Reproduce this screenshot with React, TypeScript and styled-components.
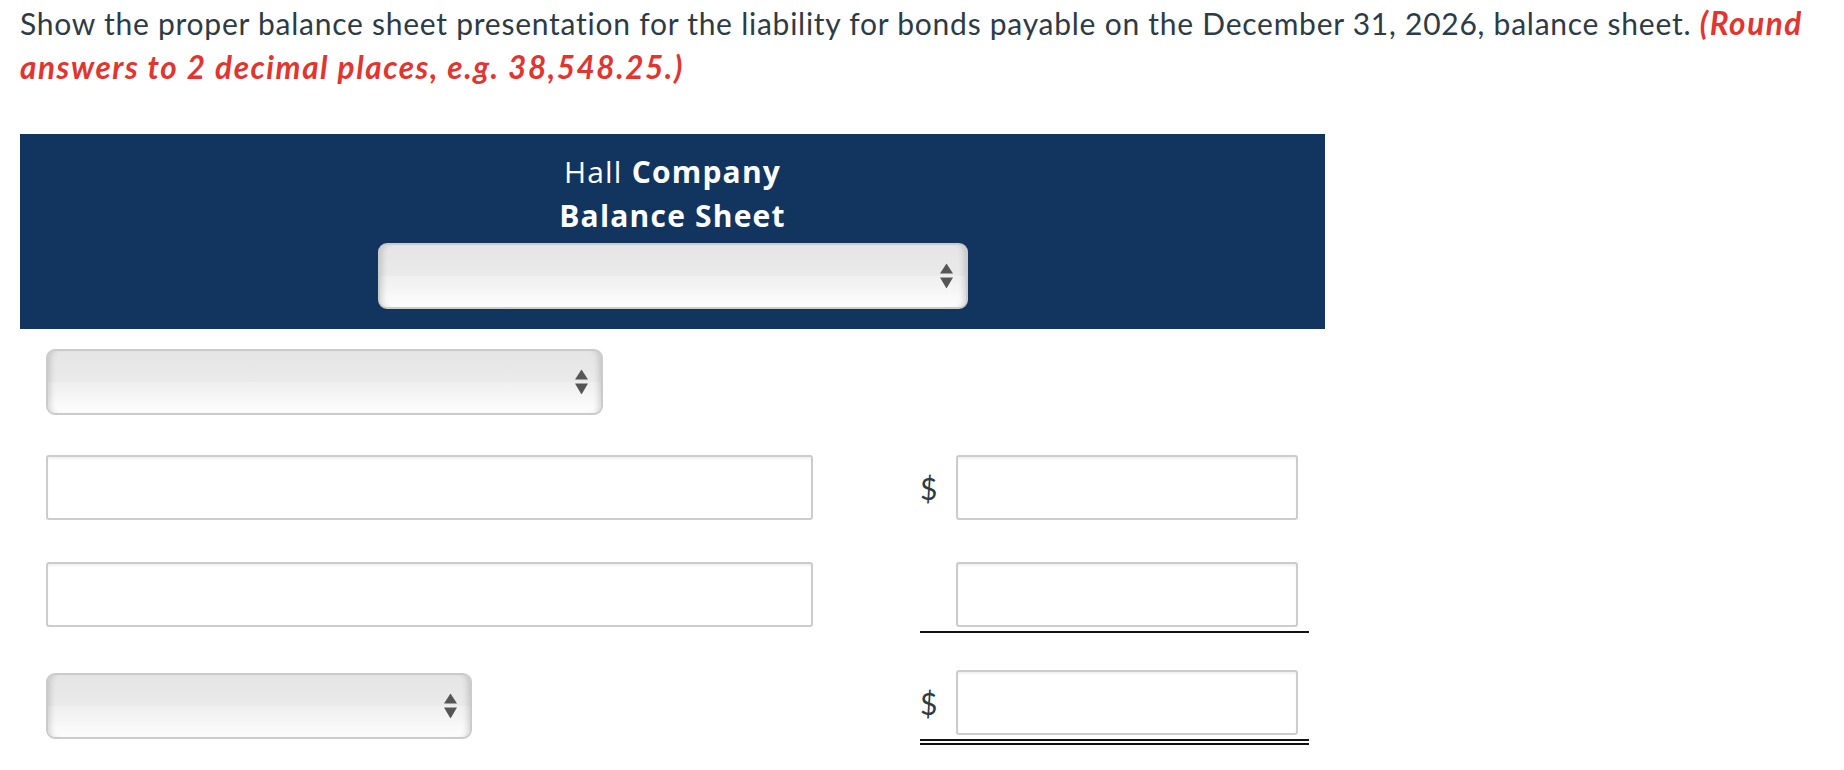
import React from "react";
import styled, { createGlobalStyle } from "styled-components";

const GlobalStyle = createGlobalStyle`
  html, body {
    margin: 0;
    padding: 0;
    background: #ffffff;
  }
  body {
    font-family: Lato, "Noto Sans", sans-serif;
  }
`;

const Page = styled.div`
  width: 1844px;
  box-sizing: border-box;
  padding: 0 20px 0 20px;
`;

const Prompt = styled.p`
  margin: 0;
  padding-top: 2px;
  font-family: Lato, sans-serif;
  font-size: 30px;
  line-height: 43.5px;
  letter-spacing: 0.75px;
  color: #2d3b45;
`;

const Hint = styled.strong`
  font-style: italic;
  font-weight: 700;
  font-size: 31.5px;
  line-height: 40px;
  letter-spacing: 1.55px;
  color: #e3342f;
`;

const Header = styled.div`
  margin-top: 45px;
  width: 1305px;
  box-sizing: border-box;
  padding: 16px 0 20px;
  background: #12355f;
  color: #ffffff;
  text-align: center;
  font-family: "Open Sans", sans-serif;
  font-size: 30px;
  line-height: 44px;
  letter-spacing: 1.2px;
`;

const TitleLine = styled.div<{ $bold?: boolean }>`
  font-weight: ${(p) => (p.$bold ? 700 : 500)};
`;

const Bold = styled.span`
  font-weight: 700;
`;

const HeaderSelectRow = styled.div`
  display: flex;
  justify-content: center;
  margin-top: 5px;
`;

const SelectWrap = styled.div<{ $width: number; $offset?: number }>`
  position: relative;
  width: ${(p) => p.$width}px;
  height: 66px;
  margin-top: ${(p) => p.$offset ?? 0}px;
`;

const SelectBox = styled.select`
  appearance: none;
  -webkit-appearance: none;
  display: block;
  width: 100%;
  height: 100%;
  box-sizing: border-box;
  border: 2px solid #cbcbcb;
  border-radius: 9px;
  background: linear-gradient(
    to bottom,
    #e5e5e5 0%,
    #eaeaea 49%,
    #efefef 50%,
    #fdfdfd 100%
  );
  box-shadow: inset 7px 0 6px -5px rgba(0, 0, 0, 0.16),
    inset -7px 0 6px -5px rgba(0, 0, 0, 0.16);
  font-family: Lato, sans-serif;
  font-size: 24px;
  color: #2d3b45;
  outline: none;
`;

const Arrows = styled.svg`
  position: absolute;
  right: 15px;
  top: 50%;
  transform: translateY(-50%);
  pointer-events: none;
`;

const Form = styled.div`
  padding-left: 26px;
  display: flex;
  flex-direction: column;
`;

const Row = styled.div<{ $top: number }>`
  display: grid;
  grid-template-columns: 767px 389px;
  column-gap: 107px;
  align-items: start;
  margin-top: ${(p) => p.$top}px;
`;

const TextField = styled.input`
  display: block;
  width: 100%;
  height: 65px;
  box-sizing: border-box;
  border: 2px solid #cccccc;
  border-radius: 3px;
  box-shadow: inset 0 2px 2px rgba(0, 0, 0, 0.06);
  background: #ffffff;
  font-family: Lato, sans-serif;
  font-size: 24px;
  padding: 0 12px;
  outline: none;
`;

type Rule = "none" | "single" | "double";

const AmountCell = styled.div<{ $rule: Rule }>`
  display: flex;
  align-items: center;
  padding-right: 11px;
  padding-bottom: ${(p) => (p.$rule === "none" ? 0 : 4)}px;
  border-bottom: ${(p) =>
    p.$rule === "single"
      ? "2px solid #111"
      : p.$rule === "double"
      ? "6px double #111"
      : "none"};
`;

const Dollar = styled.span`
  flex: 0 0 36px;
  font-family: Lato, sans-serif;
  font-size: 30px;
  line-height: 1;
  color: #2d3b45;
`;

function ArrowIcon() {
  return (
    <Arrows width="13" height="25" viewBox="0 0 13 25">
      <polygon points="6.5,0 13,10 0,10" fill="#555555" />
      <polygon points="0,14 13,14 6.5,25" fill="#555555" />
    </Arrows>
  );
}

function Dropdown({ width, offset }: { width: number; offset?: number }) {
  return (
    <SelectWrap $width={width} $offset={offset}>
      <SelectBox defaultValue="">
        <option value=""></option>
      </SelectBox>
      <ArrowIcon />
    </SelectWrap>
  );
}

function Amount({ dollar, rule }: { dollar?: boolean; rule: Rule }) {
  return (
    <AmountCell $rule={rule}>
      <Dollar>{dollar ? "$" : ""}</Dollar>
      <TextField type="text" />
    </AmountCell>
  );
}

export default function App() {
  return (
    <>
      <GlobalStyle />
      <Page>
        <Prompt>
          Show the proper balance sheet presentation for the liability for
          bonds payable on the December 31, 2026, balance sheet.{" "}
          <Hint>(Round answers to 2 decimal places, e.g. 38,548.25.)</Hint>
        </Prompt>
        <Header>
          <TitleLine>
            Hall <Bold>Company</Bold>
          </TitleLine>
          <TitleLine $bold>Balance Sheet</TitleLine>
          <HeaderSelectRow>
            <Dropdown width={590} />
          </HeaderSelectRow>
        </Header>
        <Form>
          <Row $top={20}>
            <Dropdown width={557} />
          </Row>
          <Row $top={40}>
            <TextField type="text" />
            <Amount dollar rule="none" />
          </Row>
          <Row $top={42}>
            <TextField type="text" />
            <Amount rule="single" />
          </Row>
          <Row $top={37}>
            <Dropdown width={426} offset={3} />
            <Amount dollar rule="double" />
          </Row>
        </Form>
      </Page>
    </>
  );
}
